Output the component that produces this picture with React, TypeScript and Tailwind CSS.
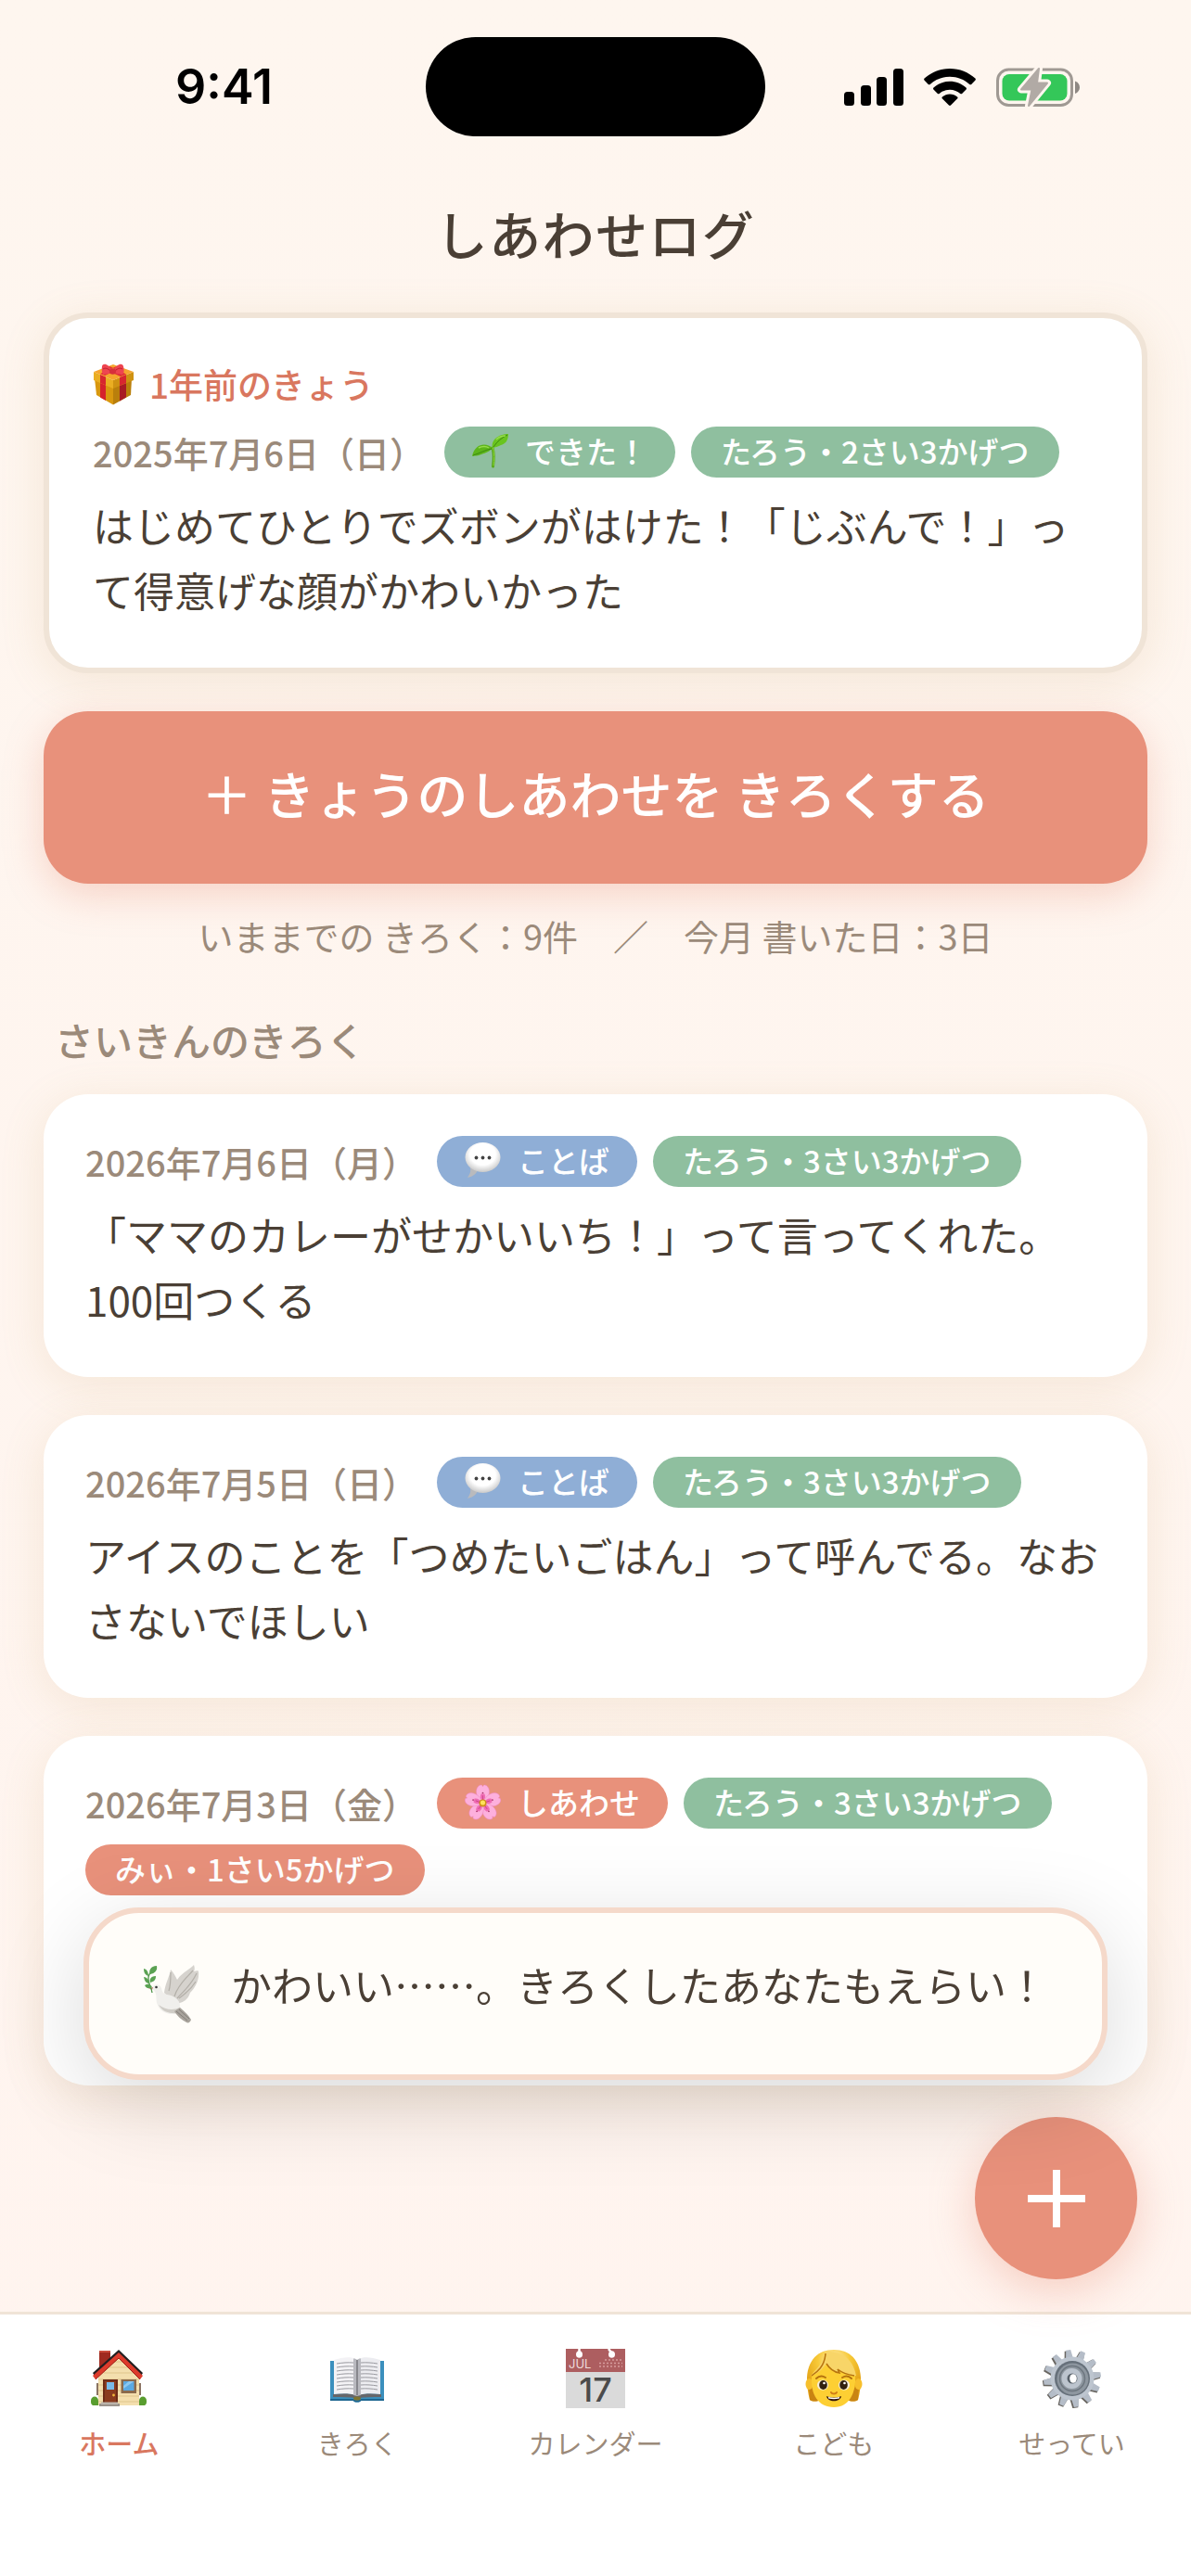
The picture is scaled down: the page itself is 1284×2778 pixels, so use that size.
import type { ReactNode } from "react";

type Tone = "green" | "blue" | "coral";

type Tag = { label: string; tone: Tone; icon?: ReactNode };

const toneClass: Record<Tone, string> = {
  green: "bg-[#8fbf9f]",
  blue: "bg-[#8faed6]",
  coral: "bg-[#e8917b]",
};

function SignalIcon() {
  return (
    <svg width="64" height="40" viewBox="0 0 64 40" aria-hidden="true">
      <rect x="0" y="25" width="11" height="15" rx="3.500" />
      <rect x="18" y="18" width="11" height="22" rx="3.500" />
      <rect x="35" y="9" width="11" height="31" rx="3.500" />
      <rect x="53" y="0" width="11" height="40" rx="3.500" />
    </svg>
  );
}

function WifiIcon() {
  return (
    <svg width="56" height="40" viewBox="0 0 56 40" aria-hidden="true">
      <path d="M28 0C17.400 0 7.800 4 .6 10.600c-.6.600-.6 1.300-.1 1.900l4.300 4.400c.5.500 1.300.5 1.900 0C12.300 11.800 19.800 8.700 28 8.700s15.700 3.100 21.300 8.200c.6.500 1.400.5 1.900 0l4.300-4.400c.5-.6.500-1.300-.1-1.900C48.200 4 38.600 0 28 0z" />
      <path d="M28 13.800c-6.700 0-12.800 2.500-17.500 6.700-.6.500-.6 1.300-.1 1.900l4.500 4.500c.5.500 1.200.5 1.800.1 3-2.700 7-4.300 11.300-4.300s8.300 1.600 11.300 4.300c.6.400 1.300.4 1.800-.1l4.500-4.500c.5-.6.500-1.400-.1-1.900-4.700-4.200-10.800-6.700-17.500-6.700z" />
      <path d="M28 27.600c-3.100 0-5.900 1.100-8.100 2.900-.6.500-.6 1.300-.1 1.800l7.200 7.200c.6.600 1.400.6 2 0l7.200-7.200c.5-.5.500-1.300-.1-1.800-2.200-1.800-5-2.900-8.100-2.900z" />
    </svg>
  );
}

function BatteryIcon() {
  const bolt = "M46 1 27 23.500h11.500L35 41l20-24.500H44z";
  return (
    <svg width="90" height="42" viewBox="0 0 90 42" className="overflow-visible" aria-hidden="true">
      <rect x="1.500" y="2" width="80" height="38.500" rx="12" fill="none" stroke="#9f9993" strokeWidth="3" />
      <rect x="6.500" y="7" width="70" height="28.500" rx="7.500" fill="#34c759" />
      <path d="M85 14.500c3 1 5 3.700 5 6.700s-2 5.700-5 6.700z" fill="#8e8883" />
      <path d={bolt} fill="#fef6ef" stroke="#fef6ef" strokeWidth="8" strokeLinejoin="round" />
      <path d={bolt} fill="#b1aaa5" stroke="#b1aaa5" strokeWidth="2" strokeLinejoin="round" />
    </svg>
  );
}

function GiftIcon() {
  return (
    <svg width="45" height="45" viewBox="0 0 45 45" aria-hidden="true">
      <path d="M2 16 22 25v19.500L4 34z" fill="#d9980f" />
      <path d="M42 16 22 25v19.500L41 34z" fill="#b97f0c" />
      <path d="m8 19 6 2.800V40l-6-3.500z" fill="#d5222c" />
      <path d="m36 19-7 3v18.500l7-4z" fill="#a81a24" />
      <path d="M1 9 22 18v9L1 18z" fill="#eaae22" />
      <path d="M44 9 22 18v9l22-9z" fill="#cf9212" />
      <path d="M22 1 44 9 22 18 1 9z" fill="#f5a52d" />
      <path d="m8 12 6 2.500v9L8 21zM29 15l7-3v9l-7 3z" fill="#d7262f" />
      <path d="m12 6 18 8 6-2.500L18 3zM32 4 13 13l-5-2L27 2.500z" fill="#dd2b34" />
      <path d="M21 8C17 0 11-1 10 3c-.5 4 0 7 1 9 4-.5 7-1 10-2.500zM22 8c4-8 10-9 11-5s1 7-1 9c-4-.5-7-1-10-2.500z" fill="#ee4550" />
      <path d="M19 8c-3-3-6-3.500-8-2M24 8c3-3 6-3.500 8-2" fill="none" stroke="#b91d28" strokeWidth="1" />
      <ellipse cx="21.500" cy="8.500" rx="3.500" ry="3.300" fill="#d7303b" />
    </svg>
  );
}

function SproutIcon() {
  return (
    <svg width="39" height="39" viewBox="0 0 39 39" aria-hidden="true">
      <path d="M22 16c2 7 1.500 13 .5 20" fill="none" stroke="#57a818" strokeWidth="3" strokeLinecap="round" />
      <path d="M22.500 16c1.500 6 1.500 13 .5 19" fill="none" stroke="#8cd63b" strokeWidth="1" strokeLinecap="round" />
      <path d="M22 16C15 10 3 11 0 25c4-1 6 0 10-2 5-2 9-3 12-7z" fill="#5cb51a" />
      <path d="M22 16C20 8 28 1 39 1c0 8-4 11-8 12-4 2-6 2-9 3z" fill="#69c41f" />
      <path d="M1 24c7-2 13-6 20-7M23 15C27 9 32 5 38 2" fill="none" stroke="#3c8a10" strokeWidth="1" />
      <path d="M7 16c4-2 8-2 11 0M26 7c3-3 6-4 10-4" fill="none" stroke="#95db4c" strokeWidth="1.500" />
    </svg>
  );
}

function SpeechIcon() {
  return (
    <svg width="39" height="39" viewBox="0 0 39 39" aria-hidden="true">
      <defs>
        <radialGradient id="bubble" cx="50%" cy="40%" r="60%">
          <stop offset="0.600" stopColor="#fff" />
          <stop offset="1" stopColor="#c9c9c9" />
        </radialGradient>
      </defs>
      <path d="M6 27c1 5-1 8-3 11 6-1 9-4 11-8z" fill="#b9babd" />
      <ellipse cx="19.500" cy="16" rx="19" ry="16" fill="url(#bubble)" />
      <circle cx="12.500" cy="16.500" r="1.900" fill="#444" />
      <circle cx="19.500" cy="16.500" r="1.900" fill="#444" />
      <circle cx="26.500" cy="16.500" r="1.900" fill="#444" />
    </svg>
  );
}

function BlossomIcon() {
  return (
    <svg width="41" height="41" viewBox="0 0 41 41" aria-hidden="true">
      {[0, 72, 144, 216, 288].map((angle) => (
        <g key={angle} transform={`rotate(${angle} 20.500 21.500)`}>
          <path
            d="M20.500 21.500C15 18 11.500 10 14 4.500c1.300-2.700 3.500-3.800 5-3.500.8.200 1.100 1.200 1.500 2 .4-.8.700-1.800 1.500-2 1.500-.3 3.700.8 5 3.500C29.500 10 26 18 20.500 21.500z"
            fill="#fdb0dd"
            stroke="#ee86c4"
            strokeWidth="0.500"
          />
          <path d="M20.500 21c-3-4-3.500-7-2-10h4c1.500 3 1 6-2 10z" fill="#ef6cb4" />
          <circle cx="20.500" cy="10" r="0.900" fill="#a52b61" />
          <path d="M20.500 20v-7" stroke="#c93c82" strokeWidth="0.800" />
        </g>
      ))}
      <circle cx="20.500" cy="21.500" r="4.200" fill="#cf8f19" />
      <circle cx="20.500" cy="21" r="2.700" fill="#ffe25a" />
    </svg>
  );
}

function DoveIcon() {
  return (
    <svg width="60" height="63" viewBox="0 0 60 63" aria-hidden="true">
      <path d="M22 30C23 20 28 12 29 5c3 3 5 7 7 11C41 8 50 5 54 0c1 3 1 5 0 7 3-1 5-1 5 0 1 9-3 17-9 23-2 7-7 11-16 12z" fill="#d6d3ce" />
      <path d="M33 34c4-13 14-21 20-28M36 36c8-9 15-14 21-27M27 28c2-6 2-13 2-20M38 36c7-5 13-10 18-18" fill="none" stroke="#b3afa8" strokeWidth="1.200" />
      <path d="M9 25c2-5 8-5 10 0 1 4 2 6 6 7 7 1 14 5 14 12l1 7C27 56 17 51 14 41c-1-6 0-9-2-12z" fill="#f0efec" />
      <path d="M16 43c4 8 13 10 21 9l2-6c-7 3-15 3-23-3z" fill="#cfccc6" />
      <path d="m33 50 6-4c5 4 9 8 12 13-1 3-3 4-5 3-6-3-10-7-13-12z" fill="#a8a39c" />
      <path d="m35 50 12 10M38 48l11 10" stroke="#827e78" strokeWidth="1" />
      <circle cx="13.500" cy="24" r="1.300" fill="#333" />
      <path d="m10 24-5 1 4 2z" fill="#c57972" />
      <path d="M9 30c-1-8-5-9-4-17C6 8 9 6 12 3" fill="none" stroke="#4d9448" strokeWidth="1.300" />
      <path d="M14 1C7 1 5 7 7 10c5-1 8-4 7-9zM0 4c0 5 2 7 5 8 0-4-1-7-5-8zM0 13c1 5 3 7 6 7 0-4-3-7-6-7zM13 12c-6 0-7 4-6 7 4-1 6-3 6-7zM1 22c2 4 5 4 8 2-2-4-5-4-8-2z" fill="#5ba253" />
    </svg>
  );
}

function HouseIcon() {
  return (
    <svg width="62" height="62" viewBox="0 0 62 62" aria-hidden="true">
      <path d="M10 1h12v14L10 25z" fill="#9f2a20" />
      <path d="M10 1h12v2H10z" fill="#c94a3c" />
      <path d="M9 25 31 3l22 22v35H9z" fill="#f4dfae" />
      <path d="M9 32h44M9 38h44M9 44h44M9 50h44M9 56h44M15 25h32M20 19h22M25 13h12" stroke="#dfc58c" strokeWidth="1" />
      <path d="M31 0 3 25l3 5L31 9l23 21 3-5z" fill="#231f20" />
      <path d="M31 3 3 28l3 4L31 9l23 23 3-4z" fill="#dc3b2c" />
      <path d="m6 32 25-23 23 23" fill="none" stroke="#9e1f17" strokeWidth="1" />
      <path d="M7 36h2v13H7zM53 36h2v13h-2z" fill="#8b7362" />
      <path d="M14 32h16v26H14z" fill="#6d2c17" />
      <path d="M16 34h12v24H16z" fill="#8a3b1f" />
      <path d="M18 35h8v8h-8z" fill="#79bae8" />
      <circle cx="25.500" cy="49" r="1.400" fill="#f0b63a" />
      <path d="M33.500 32H50v15H33.500z" fill="#8b6a4c" />
      <path d="M36 34h11.500v10H36z" fill="#5aa9e2" />
      <path d="M36 39 42 34h5.500L36 42z" fill="#8cc8f0" />
      <path d="M1 55c0-6 8-6 8 0v5H3c-2-1-2-3-2-5zM53 60v-5c0-6 8-6 8 0 0 2 0 4-2 5z" fill="#599d2f" />
      <path d="M10 58h22v3H10z" fill="#9b948c" />
      <path d="M12 56.500h18V59H12z" fill="#bbb4ab" />
    </svg>
  );
}

function BookIcon() {
  return (
    <svg width="62" height="62" viewBox="0 0 62 62" aria-hidden="true">
      <path d="M2 12h58v43H35c-1 2-7 2-8 0H2z" fill="#3b8fbd" />
      <path d="M2 53h25c1 2 7 2 8 0h25v2H35c-1 2-7 2-8 0H2z" fill="#1e6690" />
      <path d="M5 48c10-1 19-1 26 1 7-2 16-2 26-1v3c-10 0-18 0-24 1h-4c-6-1-14-1-24-1z" fill="#66666a" />
      <path d="M6 11c9-3 18-4 24-1v39c-7-2-15-2-24-1z" fill="#f3f2f5" />
      <path d="M56 11c-9-3-18-4-24-1v39c7-2 15-2 24-1z" fill="#ececf0" />
      <path d="M27 9.500c2 0 3 .5 4 1.500 1-1 2-1.500 4-1.500V49l-4 1-4-1z" fill="#b9b9bf" />
      <path d="M31 11v38" stroke="#77777d" strokeWidth="1.500" />
      {[15, 19, 23, 27, 31, 35, 39, 43].map((y) => (
        <path key={y} d={`M9 ${y}c6-1 12-1.500 18-1M35 ${y - 1}c6-.5 12 0 18 1`} fill="none" stroke="#9a9aa0" strokeWidth="1" />
      ))}
      <ellipse cx="31" cy="52.500" rx="4" ry="2" fill="#7f7430" />
    </svg>
  );
}

function CalendarIcon() {
  return (
    <svg width="64" height="64" viewBox="0 0 64 64" className="overflow-visible" aria-hidden="true">
      <rect width="64" height="64" fill="#dadada" />
      <rect width="64" height="25" fill="#ad5e60" />
      <path d="M14.500 0v5M46 0l3 4" stroke="#fff" strokeWidth="2.500" />
      <ellipse cx="14.500" cy="6" rx="3.500" ry="3.800" fill="#fff" />
      <ellipse cx="49.500" cy="6" rx="3.500" ry="3.800" fill="#fff" />
      <path d="M36 19h25M36 15.500h25M42 12h19" stroke="#d69c9c" strokeWidth="1.500" strokeDasharray="2 2" />
      <text x="3" y="21" fontSize="13" fill="#eddcdc" fontFamily="Inter, sans-serif">JUL</text>
      <text x="32" y="57" textAnchor="middle" fontSize="36" fontWeight="500" fill="#4b4b4b" fontFamily="Inter, sans-serif">17</text>
    </svg>
  );
}

function ChildIcon() {
  return (
    <svg width="62" height="62" viewBox="0 0 62 62" aria-hidden="true">
      <defs>
        <radialGradient id="hair" cx="50%" cy="20%" r="60%">
          <stop offset="0" stopColor="#fff0bd" />
          <stop offset="0.500" stopColor="#f7c938" />
          <stop offset="1" stopColor="#e5a417" />
        </radialGradient>
      </defs>
      <path d="M31 0C13 0 3 12 2 30c0 9 1 17 3 24 3 2 8 2 11 0h30c3 2 8 2 11 0 2-7 3-15 3-24C59 12 49 0 31 0z" fill="url(#hair)" />
      <path d="M5 54c3 2 8 2 11 0l-8-14H4zM57 54c-3 2-8 2-11 0l8-14h4z" fill="#c98412" />
      <ellipse cx="4.500" cy="37" rx="4" ry="6" fill="#f7bf2c" />
      <ellipse cx="57.500" cy="37" rx="4" ry="6" fill="#f7bf2c" />
      <path d="M7 30c0-8 8-10 14-16 4 6 26 6 33 14 1 18-6 34-23 34S6 48 7 30z" fill="#fdcf33" />
      <path d="M24 2c-4 8-9 17-18 26 6-1 12-6 17-13 3 5 8 9 14 10l-2-4c6 5 12 7 20 7C52 12 42 2 24 2z" fill="#f8d568" />
      <path d="M22 4c-1 14-9 20-15 24M23 15c3 5 8 9 14 10l-2-4c5 4 12 6 18 7" fill="none" stroke="#b7740f" strokeWidth="1.500" />
      <path d="M12 31c3-3 7-3 10-1M40 30c3-2 7-2 10 1" fill="none" stroke="#b4720e" strokeWidth="2" strokeLinecap="round" />
      <ellipse cx="19" cy="38" rx="6" ry="5.500" fill="#f7eedb" />
      <ellipse cx="42" cy="38" rx="6" ry="5.500" fill="#f7eedb" />
      <ellipse cx="19.500" cy="38" rx="4.300" ry="5" fill="#32210f" />
      <ellipse cx="41.500" cy="38" rx="4.300" ry="5" fill="#32210f" />
      <circle cx="20.500" cy="36" r="1.300" fill="#fff" />
      <circle cx="42.500" cy="36" r="1.300" fill="#fff" />
      <path d="M28 46c1 2 5 2 6 0" fill="none" stroke="#d07e17" strokeWidth="2" strokeLinecap="round" />
      <path d="M23 50c5 2 11 2 16 0-1 7-15 7-16 0z" fill="#301409" />
      <path d="M25 51c4 1 8 1 12 0v1.500c-4 1-8 1-12 0z" fill="#fff" />
    </svg>
  );
}

function GearIcon() {
  return (
    <svg width="64" height="64" viewBox="0 0 64 64" aria-hidden="true">
      <g fill="#696661" transform="translate(-1 1)">
        {Array.from({ length: 12 }, (_, i) => (
          <path key={i} d="M27 14 29 1h6l2 13z" transform={`rotate(${i * 30 - 8} 32 32)`} />
        ))}
      </g>
      <g fill="#b5bdc8">
        {Array.from({ length: 12 }, (_, i) => (
          <path key={i} d="M27.500 14 29.500 1h5l2 13z" transform={`rotate(${i * 30 - 8} 32 32)`} />
        ))}
      </g>
      <circle cx="32" cy="32" r="23.500" fill="#bdc5cf" />
      <circle cx="32" cy="32" r="19" fill="#66707a" />
      <circle cx="32.500" cy="32.500" r="17" fill="#8d969f" />
      <circle cx="32" cy="32" r="13.500" fill="none" stroke="#6d767f" strokeWidth="1.500" />
      <circle cx="31.500" cy="32" r="11" fill="#bcc4ce" />
      <circle cx="32" cy="32" r="5.500" fill="#59626b" />
      <ellipse cx="33" cy="32" rx="3.800" ry="4.800" fill="#fff" />
    </svg>
  );
}

function Chip({ label, tone, icon }: Tag) {
  return (
    <span
      className={`inline-flex h-[55px] items-center gap-[18px] rounded-full pb-0.5 text-[33px] font-medium leading-none whitespace-nowrap text-white ${
        icon ? "px-[30px]" : "px-8"
      } ${toneClass[tone]}`}
    >
      {icon && <span className="flex w-[39px] justify-center">{icon}</span>}
      {label}
    </span>
  );
}

function EntryMeta({ date, tags }: { date: string; tags: Tag[] }) {
  return (
    <div className="flex flex-wrap items-center gap-x-[17px] gap-y-[17px]">
      <time className="mr-1 text-[38px] leading-[55px] font-medium whitespace-nowrap text-[#9b8a7a]">
        {date}
      </time>
      {tags.map((tag) => (
        <Chip key={tag.label} {...tag} />
      ))}
    </div>
  );
}

function EntryCard({
  date,
  tags,
  children,
}: {
  date: string;
  tags: Tag[];
  children?: ReactNode;
}) {
  return (
    <article className="rounded-[48px] bg-white px-[45px] pt-[45px] pb-[49px] shadow-[0_9px_48px_rgba(190,155,90,0.16)]">
      <EntryMeta date={date} tags={tags} />
      <p className="mt-4 min-h-[140px] text-[44px] leading-[70px]">{children}</p>
    </article>
  );
}

const entries: { date: string; tags: Tag[]; text?: string }[] = [
  {
    date: "2026年7月6日（月）",
    tags: [
      { label: "ことば", tone: "blue", icon: <SpeechIcon /> },
      { label: "たろう・3さい3かげつ", tone: "green" },
    ],
    text: "「ママのカレーがせかいいち！」って言ってくれた。100回つくる",
  },
  {
    date: "2026年7月5日（日）",
    tags: [
      { label: "ことば", tone: "blue", icon: <SpeechIcon /> },
      { label: "たろう・3さい3かげつ", tone: "green" },
    ],
    text: "アイスのことを「つめたいごはん」って呼んでる。なおさないでほしい",
  },
  {
    date: "2026年7月3日（金）",
    tags: [
      { label: "しあわせ", tone: "coral", icon: <BlossomIcon /> },
      { label: "たろう・3さい3かげつ", tone: "green" },
      { label: "みぃ・1さい5かげつ", tone: "coral" },
    ],
  },
];

const tabs = [
  { label: "ホーム", icon: <HouseIcon />, active: true },
  { label: "きろく", icon: <BookIcon /> },
  { label: "カレンダー", icon: <CalendarIcon /> },
  { label: "こども", icon: <ChildIcon /> },
  { label: "せってい", icon: <GearIcon /> },
];

export default function App() {
  return (
    <div className="relative flex min-h-screen flex-col bg-gradient-to-b from-[#fef6ef] to-[#fff4ef] font-['Noto_Sans_CJK_JP',sans-serif] text-[#4a3f35]">
      {/* status bar */}
      <div className="grid grid-cols-[1fr_366px_1fr] items-center pt-10 text-black">
        <span className="pl-6 text-center font-['Inter',sans-serif] text-[52px] leading-none font-semibold">
          9:41
        </span>
        <div className="h-[107px] rounded-full bg-black" />
        <div className="flex items-center justify-center gap-[22px] pr-9">
          <SignalIcon />
          <WifiIcon />
          <BatteryIcon />
        </div>
      </div>

      <header className="pt-16 pb-[46px] text-center">
        <h1 className="text-[56px] leading-[80px] font-medium tracking-wide">しあわせログ</h1>
      </header>

      <main className="flex flex-col px-[47px] pb-16">
        {/* a year ago today */}
        <section className="rounded-[48px] border-[6px] border-[#f0e4d7] bg-white px-[47px] pt-[38px] pb-[49px] shadow-[0_9px_48px_rgba(190,155,90,0.16)]">
          <h2 className="mb-3 flex h-[67px] items-center gap-4 text-[37px] leading-none font-medium text-[#d9775f]">
            <GiftIcon />
            1年前のきょう
          </h2>
          <EntryMeta
            date="2025年7月6日（日）"
            tags={[
              { label: "できた！", tone: "green", icon: <SproutIcon /> },
              { label: "たろう・2さい3かげつ", tone: "green" },
            ]}
          />
          <p className="mt-4 text-[44px] leading-[70px]">
            はじめてひとりでズボンがはけた！「じぶんで！」って得意げな顔がかわいかった
          </p>
        </section>

        <button
          type="button"
          className="mt-[41px] h-[186px] rounded-[48px] bg-[#e8917b] pb-3 text-[55px] leading-none font-medium text-white shadow-[0_12px_42px_rgba(232,145,123,0.35)]"
        >
          ＋ きょうのしあわせを きろくする
        </button>

        <p className="mt-[27px] text-center text-[38px] leading-[58px] whitespace-pre text-[#9b8a7a]">
          いままでの きろく：9件　／　今月 書いた日：3日
        </p>

        <h2 className="mt-[53px] mb-[29px] pl-3 text-[42px] leading-[60px] font-medium text-[#9b8a7a]">
          さいきんのきろく
        </h2>

        <div className="flex flex-col gap-[41px]">
          {entries.map((entry) => (
            <EntryCard key={entry.date} date={entry.date} tags={entry.tags}>
              {entry.text}
            </EntryCard>
          ))}
        </div>
      </main>

      {/* tab bar */}
      <nav className="mt-auto border-t-[3px] border-[#f0e4d7] bg-white pt-[38px] pb-[122px]">
        <ul className="grid grid-cols-5">
          {tabs.map((tab) => (
            <li key={tab.label}>
              <a
                href="#"
                aria-current={tab.active ? "page" : undefined}
                className={`flex flex-col items-center gap-4 text-[29px] leading-[44px] ${
                  tab.active ? "font-medium text-[#d9775f]" : "text-[#9b8a7a]"
                }`}
              >
                <span className="flex h-[62px] items-center">{tab.icon}</span>
                {tab.label}
              </a>
            </li>
          ))}
        </ul>
      </nav>

      {/* floating add button */}
      <button
        type="button"
        aria-label="きろくする"
        className="fixed right-[58px] bottom-[320px] flex size-[175px] items-center justify-center rounded-full bg-[#e8917b] shadow-[0_12px_48px_rgba(232,145,123,0.4)]"
      >
        <svg width="62" height="62" viewBox="0 0 62 62" aria-hidden="true">
          <path d="M31 0v62M0 31h62" stroke="#fff" strokeWidth="8" />
        </svg>
      </button>

      {/* toast */}
      <div
        role="status"
        className="fixed right-[90px] bottom-[535px] left-[90px] flex h-[186px] items-center justify-center gap-[34px] rounded-[60px] border-[6px] border-[#f5d9ca] bg-[#fffdf9] pb-5 shadow-[0_24px_96px_rgba(0,0,0,0.15)]"
      >
        <span className="pt-5">
          <DoveIcon />
        </span>
        <p className="text-[44px] leading-[70px] whitespace-nowrap">かわいい……。きろくしたあなたもえらい！</p>
      </div>
    </div>
  );
}
